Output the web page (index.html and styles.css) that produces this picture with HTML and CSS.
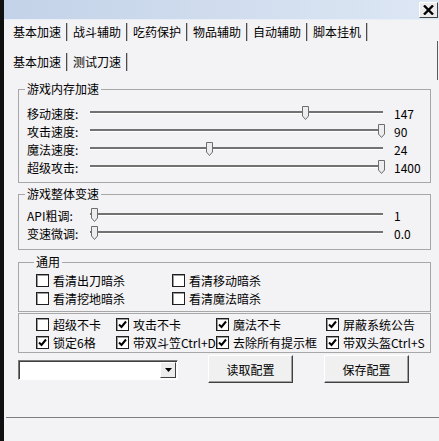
FILE: index.html
```html
<!DOCTYPE html>
<html lang="zh-CN">
<head>
  <meta charset="UTF-8" />
  <title>基本加速</title>
  <link rel="stylesheet" href="styles.css">
</head>
<body>
  <div class="window">
    <div class="titlebar">
      <span class="close">
        <svg width="11" height="10" viewBox="0 0 11 10"><path d="M1 0.5 L10 9.5 M10 0.5 L1 9.5" stroke="#000" stroke-width="2.4"/></svg>
      </span>
    </div>

    <div class="tabs tabs-main">
      <span class="tab">基本加速</span>
      <span class="tab">战斗辅助</span>
      <span class="tab">吃药保护</span>
      <span class="tab">物品辅助</span>
      <span class="tab">自动辅助</span>
      <span class="tab">脚本挂机</span>
    </div>

    <div class="page">
      <div class="page-head">
        <div class="tabs">
          <span class="tab">基本加速</span>
          <span class="tab">测试刀速</span>
        </div>
      </div>

      <fieldset class="group group-mem">
        <legend>游戏内存加速</legend>
        <div class="slider-row">
          <span class="slider-label">移动速度:</span>
          <div class="track"><span class="thumb" style="left:212px"><svg width="7" height="14" viewBox="0 0 7 14"><path d="M0.5 0.5 H6.5 V10 L3.5 13.5 L0.5 10 Z" fill="#ededed" stroke="#6d6d6d"/></svg></span></div>
          <span class="slider-value">147</span>
        </div>
        <div class="slider-row">
          <span class="slider-label">攻击速度:</span>
          <div class="track"><span class="thumb" style="left:288px"><svg width="7" height="14" viewBox="0 0 7 14"><path d="M0.5 0.5 H6.5 V10 L3.5 13.5 L0.5 10 Z" fill="#ededed" stroke="#6d6d6d"/></svg></span></div>
          <span class="slider-value">90</span>
        </div>
        <div class="slider-row">
          <span class="slider-label">魔法速度:</span>
          <div class="track"><span class="thumb" style="left:116px"><svg width="7" height="14" viewBox="0 0 7 14"><path d="M0.5 0.5 H6.5 V10 L3.5 13.5 L0.5 10 Z" fill="#ededed" stroke="#6d6d6d"/></svg></span></div>
          <span class="slider-value">24</span>
        </div>
        <div class="slider-row">
          <span class="slider-label">超级攻击:</span>
          <div class="track"><span class="thumb" style="left:288px"><svg width="7" height="14" viewBox="0 0 7 14"><path d="M0.5 0.5 H6.5 V10 L3.5 13.5 L0.5 10 Z" fill="#ededed" stroke="#6d6d6d"/></svg></span></div>
          <span class="slider-value">1400</span>
        </div>
      </fieldset>

      <fieldset class="group group-speed">
        <legend>游戏整体变速</legend>
        <div class="slider-row">
          <span class="slider-label">API粗调:</span>
          <div class="track"><span class="thumb" style="left:1px"><svg width="7" height="14" viewBox="0 0 7 14"><path d="M0.5 0.5 H6.5 V10 L3.5 13.5 L0.5 10 Z" fill="#ededed" stroke="#6d6d6d"/></svg></span></div>
          <span class="slider-value">1</span>
        </div>
        <div class="slider-row">
          <span class="slider-label">变速微调:</span>
          <div class="track"><span class="thumb" style="left:1px"><svg width="7" height="14" viewBox="0 0 7 14"><path d="M0.5 0.5 H6.5 V10 L3.5 13.5 L0.5 10 Z" fill="#ededed" stroke="#6d6d6d"/></svg></span></div>
          <span class="slider-value">0.0</span>
        </div>
      </fieldset>

      <fieldset class="group group-common">
        <legend>通用</legend>
        <div class="check-grid">
          <label class="check"><span class="box"></span>看清出刀暗杀</label>
          <label class="check"><span class="box"></span>看清移动暗杀</label>
          <label class="check"><span class="box"></span>看清挖地暗杀</label>
          <label class="check"><span class="box"></span>看清魔法暗杀</label>
        </div>
      </fieldset>

      <div class="opts">
        <label class="check"><span class="box"></span>超级不卡</label>
        <label class="check"><span class="box"><svg width="9" height="9" viewBox="0 0 9 9"><path d="M1 4.5 L3.5 7 L8 1.5" fill="none" stroke="#000" stroke-width="2"/></svg></span>攻击不卡</label>
        <label class="check"><span class="box"><svg width="9" height="9" viewBox="0 0 9 9"><path d="M1 4.5 L3.5 7 L8 1.5" fill="none" stroke="#000" stroke-width="2"/></svg></span>魔法不卡</label>
        <label class="check"><span class="box"><svg width="9" height="9" viewBox="0 0 9 9"><path d="M1 4.5 L3.5 7 L8 1.5" fill="none" stroke="#000" stroke-width="2"/></svg></span>屏蔽系统公告</label>
        <label class="check"><span class="box"><svg width="9" height="9" viewBox="0 0 9 9"><path d="M1 4.5 L3.5 7 L8 1.5" fill="none" stroke="#000" stroke-width="2"/></svg></span>锁定6格</label>
        <label class="check"><span class="box"><svg width="9" height="9" viewBox="0 0 9 9"><path d="M1 4.5 L3.5 7 L8 1.5" fill="none" stroke="#000" stroke-width="2"/></svg></span>带双斗笠Ctrl+D</label>
        <label class="check"><span class="box"><svg width="9" height="9" viewBox="0 0 9 9"><path d="M1 4.5 L3.5 7 L8 1.5" fill="none" stroke="#000" stroke-width="2"/></svg></span>去除所有提示框</label>
        <label class="check"><span class="box"><svg width="9" height="9" viewBox="0 0 9 9"><path d="M1 4.5 L3.5 7 L8 1.5" fill="none" stroke="#000" stroke-width="2"/></svg></span>带双头盔Ctrl+S</label>
      </div>

      <div class="actions">
        <div class="combo">
          <span class="combo-btn">
            <svg width="7" height="4" viewBox="0 0 7 4"><path d="M0 0 H7 L3.5 4 Z" fill="#000"/></svg>
          </span>
        </div>
        <button class="btn btn-load">读取配置</button>
        <button class="btn btn-save">保存配置</button>
      </div>
    </div>

    <div class="footer"></div>
  </div>
</body>
</html>
```

FILE: styles.css
```css
body {
  margin: 0;
  background-color: #f3f2f4;
  color: #000;
  font-family: "Noto Sans CJK SC", "Noto Sans", sans-serif;
  font-size: 12px;
}

.window {
  width: 439px;
  height: 441px;
  box-sizing: border-box;
  border-left: 4px solid #101010;
  background-color: #f3f2f4;
  overflow: hidden;
}

.titlebar {
  height: 20px;
  box-sizing: border-box;
  padding: 2px 1px 0 0;
  border-bottom: 1px solid #e8eef6;
  background: linear-gradient(to right, #c3d2e8, #dde7f4);
  display: flex;
  justify-content: flex-end;
  align-items: flex-start;
}

.close {
  width: 19px;
  height: 16px;
  box-sizing: border-box;
  border: 1px solid;
  border-color: #fff #404040 #404040 #fff;
  background-color: #ebebee;
  display: flex;
  align-items: center;
  justify-content: center;
}

.tabs {
  display: flex;
  padding-left: 4px;
}

.tabs-main {
  margin-top: 3px;
}

.tab {
  height: 18px;
  line-height: 18px;
  padding: 0 5px;
  margin-right: 1px;
  border-right: 1px solid #4c4c4c;
  box-shadow: 1px 0 #c4c4c4;
  white-space: nowrap;
}

.page {
  margin-right: 1px;
}

.page-head {
  padding: 12px 0 9px;
  border-right: 1px solid #5a5a5a;
}

.group {
  width: 413px;
  box-sizing: border-box;
  min-width: 0;
  margin: 0 0 0 14px;
  padding: 0 0 0 8px;
  border: 1px solid #a7a7a7;
}

.group legend {
  padding: 0 2px;
  margin-left: -2px;
  line-height: 14px;
}

.group-mem {
  margin-top: 2px;
  padding-top: 8px;
  padding-bottom: 6px;
}

.group-speed {
  margin-top: 4px;
  padding-top: 5px;
  padding-bottom: 7px;
}

.group-common {
  margin-top: 5px;
  padding: 2px 0 4px 17px;
}

.slider-row {
  display: flex;
  align-items: center;
  height: 18px;
}

.slider-label {
  width: 63px;
  white-space: nowrap;
}

.track {
  position: relative;
  width: 293px;
  height: 2px;
  margin-bottom: 2px;
  background-color: #727272;
  border-bottom: 1px solid #fff;
}

.thumb {
  position: absolute;
  top: -5px;
  width: 7px;
  height: 14px;
  display: block;
}

.thumb svg {
  display: block;
}

.slider-value {
  margin-left: 11px;
}

.check-grid {
  display: grid;
  grid-template-columns: 136px 136px;
}

.check {
  display: flex;
  align-items: center;
  height: 18px;
  white-space: nowrap;
}

.box {
  flex: none;
  width: 13px;
  height: 13px;
  box-sizing: border-box;
  margin-right: 4px;
  border: 1px solid #1e1e1e;
  box-shadow: inset 1px 1px #9a9a9a;
  background-color: #fff;
  display: flex;
  align-items: center;
  justify-content: center;
}

.opts {
  width: 413px;
  box-sizing: border-box;
  margin: 1px 0 0 14px;
  padding: 1px 0 1px 17px;
  border: 1px solid #a7a7a7;
  display: grid;
  grid-template-columns: 80px 100px 110px auto;
}

.actions {
  display: flex;
  align-items: flex-start;
  margin: 2px 0 0 14px;
}

.combo {
  width: 160px;
  height: 20px;
  box-sizing: border-box;
  margin-top: 5px;
  border: 1px solid;
  border-color: #7a7a7a #fff #fff #7a7a7a;
  box-shadow: inset 1px 1px #404040;
  background-color: #fff;
  display: flex;
  justify-content: flex-end;
  padding: 1px 1px 1px 2px;
}

.combo-btn {
  width: 16px;
  box-sizing: border-box;
  border: 1px solid;
  border-color: #fff #404040 #404040 #fff;
  background-color: #ececec;
  display: flex;
  align-items: center;
  justify-content: center;
}

.btn {
  width: 85px;
  height: 28px;
  box-sizing: border-box;
  padding: 0;
  border: 1px solid;
  border-color: #fff #404040 #404040 #fff;
  box-shadow: inset -1px -1px #a0a0a0;
  background-color: #f0f0f0;
  font: inherit;
  color: #000;
}

.btn-load {
  margin-left: 30px;
}

.btn-save {
  margin-left: 31px;
}

.footer {
  margin: 34px 0 0 2px;
  border-top: 1px solid #7d7d7d;
}
```
